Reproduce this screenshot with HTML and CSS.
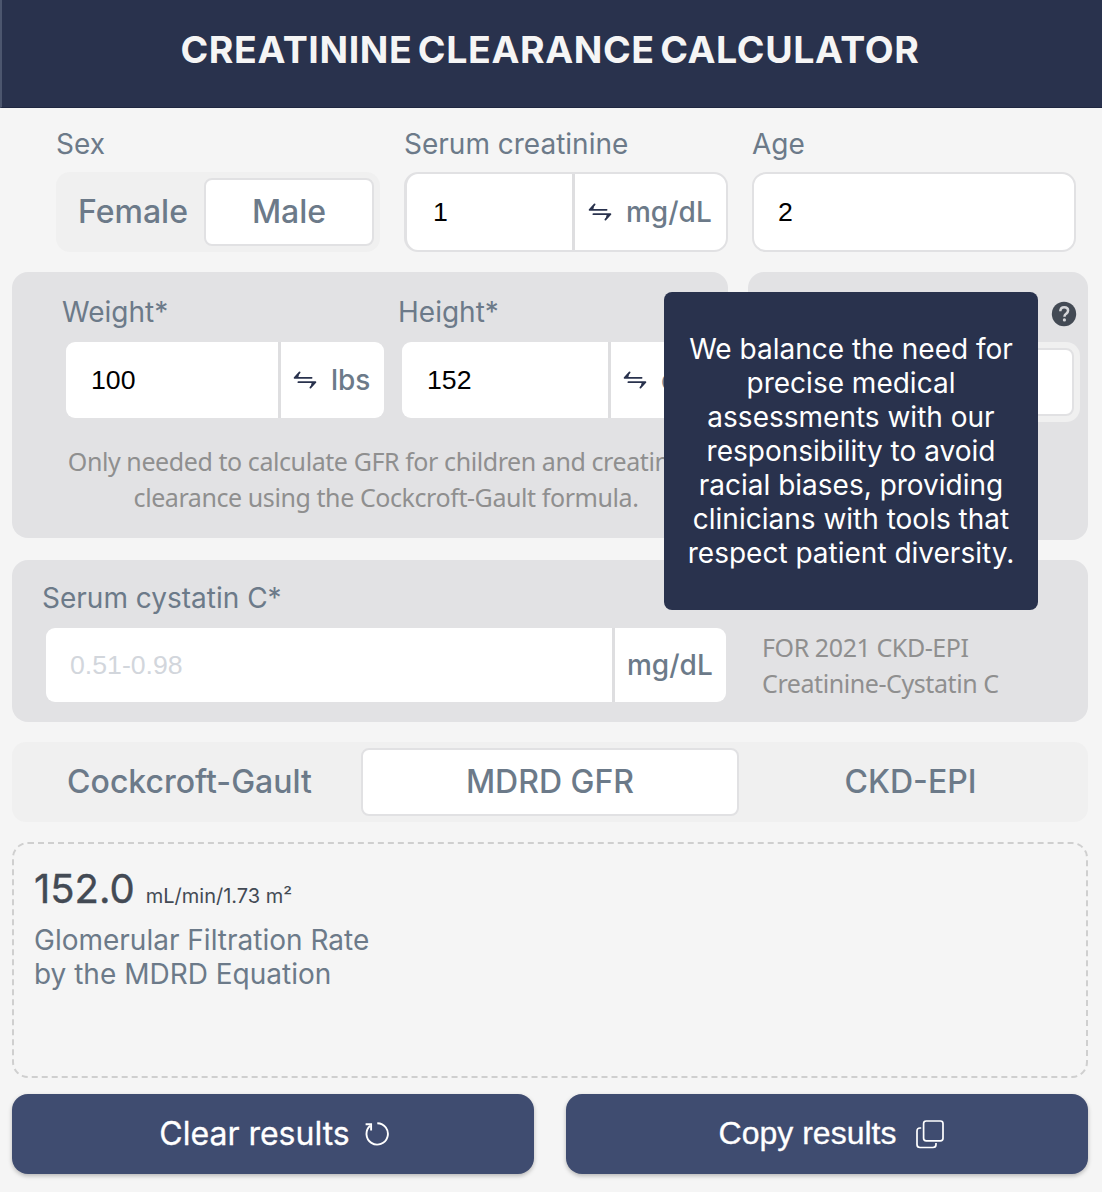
FILE: index.html
```html
<!DOCTYPE html>
<html lang="en">
<head>
<meta charset="utf-8">
<title>Creatinine Clearance Calculator</title>
<link rel="stylesheet" href="styles.css">
</head>
<body>
<svg class="defs" width="0" height="0">
  <symbol id="swap" viewBox="0 0 24 18">
    <path d="M6.600 1.400 1.600 6.800H18.600M5.400 11.200H22.400L17.400 16.600" fill="none" stroke="currentColor" stroke-width="1.800" stroke-linejoin="round" stroke-linecap="round"/>
    <path d="M6.600 1.400 1.600 6.800H5.200ZM17.400 16.600 22.400 11.200H18.800Z" fill="currentColor"/>
  </symbol>
</svg>
<header class="header"><h1 class="title">CREATININE CLEARANCE CALCULATOR</h1></header>
<main class="main">
  <section class="basics">
    <div class="field">
      <div class="label">Sex</div>
      <div class="toggle sex">
        <button class="option">Female</button>
        <button class="option selected">Male</button>
      </div>
    </div>
    <div class="field">
      <div class="label">Serum creatinine</div>
      <div class="input-group outlined creat">
        <div class="value">1</div>
        <div class="unit"><svg class="swap"><use href="#swap"/></svg><span>mg/dL</span></div>
      </div>
    </div>
    <div class="field">
      <div class="label">Age</div>
      <div class="input-group outlined"><div class="value age">2</div></div>
    </div>
  </section>

  <section class="panels">
    <div class="panel body-panel">
      <div class="body-fields">
        <div class="body-field weight">
          <div class="label">Weight*</div>
          <div class="input-group">
            <div class="value">100</div>
            <div class="unit"><svg class="swap"><use href="#swap"/></svg><span>lbs</span></div>
          </div>
        </div>
        <div class="body-field height">
          <div class="label">Height*</div>
          <div class="input-group">
            <div class="value">152</div>
            <div class="unit"><svg class="swap"><use href="#swap"/></svg><span>cm</span></div>
          </div>
        </div>
      </div>
      <p class="hint body-hint">Only needed to calculate GFR for children and creatinine<br>clearance using the Cockcroft-Gault formula.</p>
    </div>
    <div class="panel race-panel">
      <div class="help-row"><svg class="help" viewBox="0 0 26 26"><circle cx="13" cy="13" r="12.200" fill="#434a54"/><path d="M9.300 10.200c.1-2.600 1.700-4 3.900-4 2.300 0 3.900 1.300 3.900 3.400 0 1.700-1 2.400-2 3.200-1 .7-1.600 1.200-1.600 2.500v.4" fill="none" stroke="#d5d6d9" stroke-width="2.500"/><circle cx="13.400" cy="18.900" r="1.600" fill="#d5d6d9"/></svg></div>
      <div class="toggle race"><div class="option selected"></div></div>
      <div class="tooltip">We balance the need for<br>precise medical<br>assessments with our<br>responsibility to avoid<br>racial biases, providing<br>clinicians with tools that<br>respect patient diversity.</div>
    </div>
  </section>

  <section class="panel cystatin">
    <div class="cystatin-field">
      <div class="label">Serum cystatin C*</div>
      <div class="input-group">
        <div class="value placeholder">0.51-0.98</div>
        <div class="unit"><span>mg/dL</span></div>
      </div>
    </div>
    <p class="hint cystatin-hint">FOR 2021 CKD-EPI<br>Creatinine-Cystatin C</p>
  </section>

  <nav class="toggle tabs">
    <button class="option">Cockcroft-Gault</button>
    <button class="option selected">MDRD GFR</button>
    <button class="option">CKD-EPI</button>
  </nav>

  <section class="result">
    <div class="result-line"><span class="number">152.0</span><span class="result-unit">mL/min/1.73 m²</span></div>
    <div class="result-name">Glomerular Filtration Rate<br>by the MDRD Equation</div>
  </section>

  <div class="actions">
    <button class="action clear"><span>Clear results</span><svg class="reset" viewBox="0 0 26 26"><path d="M13.300 2.200A10.700 10.700 0 1 1 6.200 4.800" fill="none" stroke="#fff" stroke-width="1.900"/><path d="M1.600 3.200H7.100V9.400" fill="none" stroke="#fff" stroke-width="1.900"/></svg></button>
    <button class="action copy"><span>Copy results</span><svg class="copy-icon" viewBox="0 0 28 29"><rect x="7.600" y="1" width="19.400" height="19.800" rx="2.600" fill="none" stroke="#fff" stroke-width="1.700"/><path d="M5.200 8H4Q1 8 1 11V24.500Q1 27.500 4 27.500H17Q20 27.500 20 24.500V23" fill="none" stroke="#fff" stroke-width="1.700"/></svg></button>
  </div>
</main>
</body>
</html>
```
FILE: styles.css
```css
* { box-sizing: border-box; }
body { margin: 0; height: 1192px; background: #f5f5f5; font-family: Inter, sans-serif; color: #6c7a89; overflow: hidden; }
button { font: inherit; color: inherit; border: 0; background: none; padding: 0; margin: 0; }
.defs { position: absolute; }
.header { height: 108px; background: #29324d; border-left: 2px solid #4c566e; border-bottom: 1px solid #1f2740; display: flex; justify-content: center; padding: 26px 4px 0 0; }
.title { margin: 0; color: #f5f5f5; font-size: 37.5px; font-weight: 700; line-height: 48px; letter-spacing: 0.6px; word-spacing: -4px; white-space: nowrap; }
.main { padding: 0 14px 0 12px; }

.label { font-size: 28px; line-height: 34px; white-space: nowrap; }
.basics { display: grid; grid-template-columns: 324px 324px 324px; gap: 24px; height: 164px; padding: 19px 0 0 44px; }
.field .label { margin-bottom: 11px; }
.toggle { display: grid; height: 80px; padding: 6px; background: #f0f0f0; border-radius: 14px; }
.option { display: flex; align-items: center; justify-content: center; padding-bottom: 2px; font-size: 32px; font-weight: 500; white-space: nowrap; }
.selected { background: #fff; border: 2px solid #e1e1e3; border-radius: 8px; }
.sex { width: 324px; grid-template-columns: 142px 170px; }

.input-group { display: flex; height: 76px; background: #fff; border-radius: 9px; overflow: hidden; }
.outlined { height: 80px; border: 2px solid #e1e1e3; border-radius: 14px; }
.creat { border-left-width: 3px; }
.value { flex: 1; display: flex; align-items: center; padding: 0 0 0 25px; font-family: "Liberation Sans", sans-serif; font-size: 26.67px; color: #000; }
.age { padding-left: 24px; }
.placeholder { padding-left: 24px; color: #d2d6dc; }
.unit { display: flex; align-items: center; gap: 14px; padding-left: 12px; border-left: 3px solid #dedee0; font-size: 28px; font-weight: 500; }
.creat .value { padding-left: 26px; }
.creat .unit { width: 154px; padding-left: 13px; }
.swap { width: 24px; height: 18px; color: #29324d; }

.panels { display: grid; grid-template-columns: 716px 340px; gap: 20px; height: 288px; align-items: start; }
.panel { background: #e2e2e4; border-radius: 16px; }
.body-panel { height: 266px; padding: 23px 8px 0 50px; }
.body-fields { display: grid; grid-template-columns: 322px 322px; gap: 14px; }
.body-field .label { margin-bottom: 13px; }
.body-field .input-group { margin-left: 4px; width: 318px; }
.weight .unit { width: 106px; }
.height .unit { width: 112px; }
.hint { margin: 0; font-family: "Noto Sans", sans-serif; font-size: 25px; line-height: 36px; letter-spacing: -0.42px; color: #8f8f8f; white-space: nowrap; }
.body-hint { width: 640px; margin: 25px 0 0 4px; text-align: center; }
.race-panel { position: relative; height: 268px; }
.help-row { display: flex; justify-content: flex-end; height: 70px; padding: 29px 11px 0 0; }
.help { width: 26px; height: 26px; }
.race { margin: 0 8px 0 0; }
.tooltip { position: absolute; left: -84px; top: 20px; width: 374px; height: 318px; padding: 40px 0; background: #29324d; border-radius: 8px; color: #fff; text-align: center; font-size: 28px; line-height: 34px; white-space: nowrap; z-index: 2; }

.cystatin { display: flex; height: 162px; padding: 21px 0 0 30px; }
.cystatin .label { margin-bottom: 13px; }
.cystatin .input-group { width: 680px; height: 74px; margin-left: 4px; }
.cystatin .unit { width: 114px; }
.cystatin-hint { margin: 48px 0 0 36px; }

.tabs { margin-top: 20px; grid-template-columns: 343px 378px 343px; }
.result { height: 236px; margin-top: 20px; padding: 19px 20px; border: 2px dashed #cfcfcf; border-radius: 16px; }
.result-line { display: flex; align-items: baseline; gap: 11px; height: 60px; line-height: 52px; color: #434a54; }
.number { font-size: 40px; font-weight: 400; -webkit-text-stroke: 0.4px #434a54; }
.result-unit { font-size: 20px; }
.result-name { font-size: 28px; line-height: 34px; }
.actions { display: grid; grid-template-columns: 1fr 1fr; gap: 32px; margin-top: 16px; }
.action { display: flex; align-items: center; justify-content: center; height: 80px; background: #3f4c70; border-radius: 16px; box-shadow: 0 2px 4px rgba(0, 0, 0, .25); color: #fff; font-size: 32px; font-weight: 400; }
.action span { padding-bottom: 1px; -webkit-text-stroke: 0.3px #fff; }
.clear { gap: 14px; padding-left: 3px; }
.reset { width: 26px; height: 26px; }
.copy { gap: 20px; padding-left: 9px; font-family: "Liberation Sans", sans-serif; }
.copy-icon { width: 28px; height: 29px; }
```
